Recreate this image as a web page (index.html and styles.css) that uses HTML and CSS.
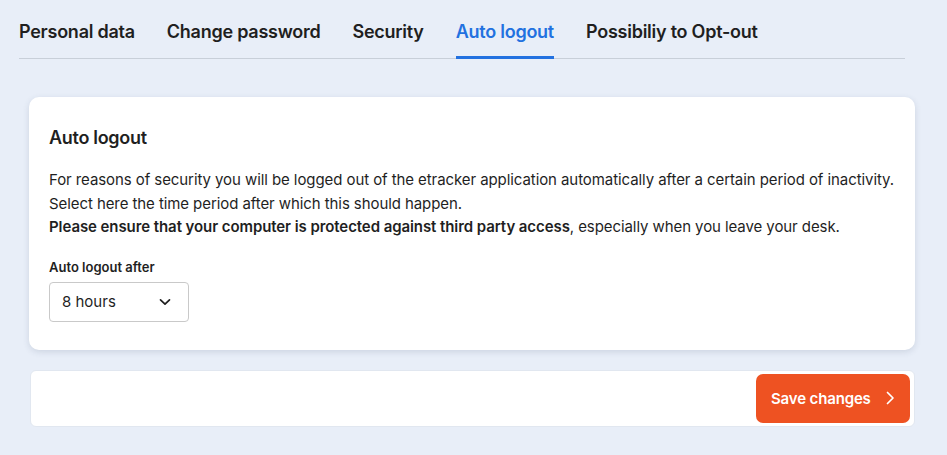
FILE: index.html
```html
<!DOCTYPE html>
<html lang="en">
<head>
<meta charset="utf-8">
<title>Auto logout</title>
<link rel="stylesheet" href="styles.css">
</head>
<body>
<nav class="tabs">
  <a class="tab">Personal data</a>
  <a class="tab">Change password</a>
  <a class="tab">Security</a>
  <a class="tab active">Auto logout</a>
  <a class="tab">Possibiliy to Opt-out</a>
</nav>
<section class="card">
  <h2 class="card-title">Auto logout</h2>
  <p class="card-text">For reasons of security you will be logged out of the etracker application automatically after a certain period of inactivity.<br>Select here the time period after which this should happen.<br><strong>Please ensure that your computer is protected against third party access</strong>, especially when you leave your desk.</p>
  <label class="field-label">Auto logout after</label>
  <div class="select">
    <span>8 hours</span>
    <svg class="chev" width="14" height="14" viewBox="0 0 14 14"><path d="M2.5 4.8 L7 9.2 L11.5 4.8" fill="none" stroke="#1f1f1f" stroke-width="1.7" stroke-linecap="round" stroke-linejoin="round"/></svg>
  </div>
</section>
<footer class="actions">
  <button class="btn-save">Save changes
    <svg width="12" height="16" viewBox="0 0 12 16"><path d="M3.5 2.5 L9 8 L3.5 13.5" fill="none" stroke="#fff" stroke-width="1.7" stroke-linecap="round" stroke-linejoin="round"/></svg>
  </button>
</footer>
</body>
</html>
```
FILE: styles.css
```css
* { box-sizing: border-box; }
html, body { margin: 0; }
body {
  background: #e8eef8;
  font-family: Inter, "Noto Sans", sans-serif;
  color: #1f1f1f;
  width: 947px;
  height: 455px;
  overflow: hidden;
}
.tabs {
  display: flex;
  gap: 32px;
  margin: 0 42px 0 19px;
  height: 59px;
  border-bottom: 1px solid #c8cfd9;
  align-items: flex-end;
}
.tab {
  font-size: 18px;
  font-weight: 600;
  letter-spacing: -0.25px;
  line-height: 24px;
  padding-bottom: 12px;
  margin-bottom: -1px;
  border-bottom: 3px solid transparent;
  color: #1f1f1f;
}
.tab.active {
  color: #2271e0;
  border-bottom-color: #2271e0;
}
.card {
  margin: 38px 32px 0 29px;
  background: #fff;
  border-radius: 10px;
  box-shadow: 0 2px 6px rgba(60, 80, 110, 0.16);
  padding: 29px 20px 28px;
}
.card-title {
  margin: 0 0 18px;
  font-size: 18px;
  font-weight: 600;
  line-height: 24px;
  letter-spacing: -0.3px;
}
.card-text {
  margin: 0 0 19px;
  font-size: 15px;
  line-height: 23.5px;
  letter-spacing: -0.08px;
}
.card-text strong { font-weight: 600; }
.field-label {
  display: block;
  font-size: 13px;
  font-weight: 600;
  line-height: 18px;
  margin-bottom: 6px;
}
.select {
  width: 140px;
  height: 40px;
  border: 1px solid #c9c9c9;
  border-radius: 4px;
  display: flex;
  align-items: center;
  justify-content: space-between;
  padding: 0 16px 0 12px;
  font-size: 15px;
}
.actions {
  margin: 20px 32px 0 30px;
  height: 57px;
  background: #fff;
  border-radius: 6px;
  border: 1px solid #e1e7f0;
  display: flex;
  justify-content: flex-end;
  align-items: center;
  padding: 0 4px;
}
.btn-save {
  width: 154px;
  height: 49px;
  border: none;
  border-radius: 7px;
  background: #ee5222;
  color: #fff;
  font-family: inherit;
  font-size: 15px;
  font-weight: 600;
  display: flex;
  align-items: center;
  justify-content: space-between;
  padding: 0 14px 0 15px;
  letter-spacing: -0.15px;
}
```
